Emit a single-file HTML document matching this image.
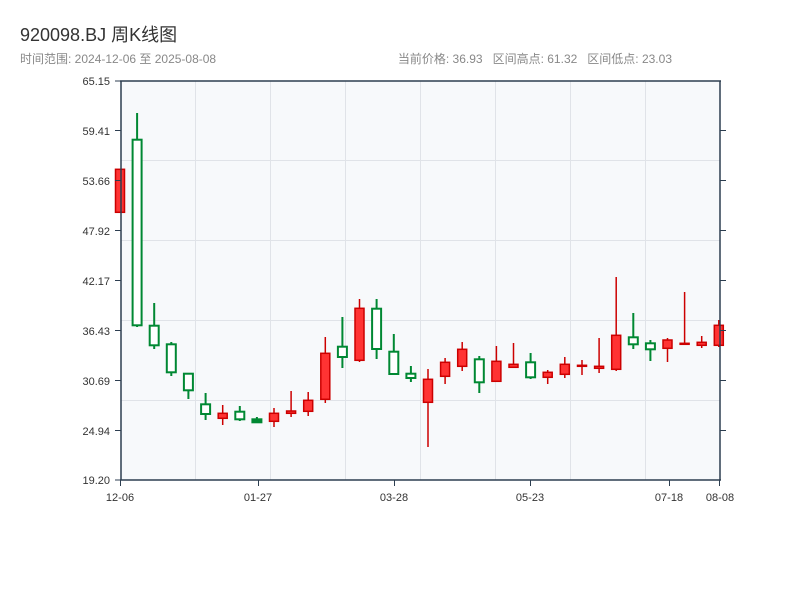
<!DOCTYPE html><html><head><meta charset="utf-8"><style>
body{margin:0;background:#fff;width:800px;height:600px;overflow:hidden;font-family:"Liberation Sans","Noto Sans CJK SC",sans-serif}
</style></head><body>
<svg width="800" height="600" xmlns="http://www.w3.org/2000/svg" font-family="Liberation Sans, Noto Sans CJK SC, sans-serif">
<text x="20" y="41" font-size="18" fill="#333">920098.BJ 周K线图</text>
<text x="20" y="63" font-size="12" fill="#888">时间范围: 2024-12-06 至 2025-08-08</text>
<text x="672" y="63" font-size="12" fill="#888" text-anchor="end" xml:space="preserve" style="white-space:pre">当前价格: 36.93   区间高点: 61.32   区间低点: 23.03</text>
<rect x="121" y="81" width="599" height="399" fill="#f7f9fb"/>
<g stroke="#e0e3e8" stroke-width="1">
<line x1="121" x2="720" y1="160.5" y2="160.5"/><line x1="121" x2="720" y1="240.5" y2="240.5"/><line x1="121" x2="720" y1="320.5" y2="320.5"/><line x1="121" x2="720" y1="400.5" y2="400.5"/>
<line x1="195.5" x2="195.5" y1="81" y2="480"/><line x1="270.5" x2="270.5" y1="81" y2="480"/><line x1="345.5" x2="345.5" y1="81" y2="480"/><line x1="420.5" x2="420.5" y1="81" y2="480"/><line x1="495.5" x2="495.5" y1="81" y2="480"/><line x1="570.5" x2="570.5" y1="81" y2="480"/><line x1="645.5" x2="645.5" y1="81" y2="480"/>
</g>
<g stroke="#008833" stroke-width="2" fill="#fff">
<line x1="137.1" x2="137.1" y1="113" y2="327"/><rect x="132.6" y="139.7" width="9" height="185.6"/>
<line x1="154.2" x2="154.2" y1="303" y2="349"/><rect x="149.7" y="325.7" width="9" height="19.6"/>
<line x1="171.3" x2="171.3" y1="342" y2="376"/><rect x="166.8" y="344.3" width="9" height="28"/>
<line x1="188.4" x2="188.4" y1="373" y2="399"/><rect x="183.9" y="373.7" width="9" height="16.6"/>
<line x1="205.6" x2="205.6" y1="393" y2="420"/><rect x="201.1" y="404.3" width="9" height="9.7"/>
<line x1="239.8" x2="239.8" y1="406" y2="421"/><rect x="235.3" y="411.7" width="9" height="7.6"/>
<line x1="256.9" x2="256.9" y1="417" y2="422"/><rect x="252.4" y="419.3" width="9" height="3" fill="#008833"/>
<line x1="342.4" x2="342.4" y1="317" y2="368"/><rect x="337.9" y="346.7" width="9" height="10.3"/>
<line x1="376.6" x2="376.6" y1="299" y2="359"/><rect x="372.1" y="308.7" width="9" height="40.3"/>
<line x1="393.8" x2="393.8" y1="334" y2="352"/><rect x="389.3" y="351.7" width="9" height="22.3"/>
<line x1="410.9" x2="410.9" y1="366" y2="382"/><rect x="406.4" y="373.7" width="9" height="4.3"/>
<line x1="479.3" x2="479.3" y1="356" y2="393"/><rect x="474.8" y="359.3" width="9" height="23"/>
<line x1="530.6" x2="530.6" y1="353" y2="379"/><rect x="526.1" y="362.3" width="9" height="15"/>
<line x1="633.3" x2="633.3" y1="313" y2="349"/><rect x="628.8" y="337.3" width="9" height="7"/>
<line x1="650.4" x2="650.4" y1="340" y2="361"/><rect x="645.9" y="343.3" width="9" height="6"/>
</g>
<g stroke="#cc0000" stroke-width="1.5" fill="#ff3333">
<rect x="115.5" y="169.3" width="9" height="43"/>
<line x1="222.7" x2="222.7" y1="405" y2="425"/><rect x="218.2" y="413.3" width="9" height="5"/>
<line x1="274" x2="274" y1="408" y2="427"/><rect x="269.5" y="413.3" width="9" height="8"/>
<line x1="291.1" x2="291.1" y1="391" y2="417"/><rect x="286.6" y="411" width="9" height="2.3"/>
<line x1="308.2" x2="308.2" y1="392" y2="416"/><rect x="303.7" y="400.3" width="9" height="11"/>
<line x1="325.3" x2="325.3" y1="337" y2="403"/><rect x="320.8" y="353.3" width="9" height="46"/>
<line x1="359.5" x2="359.5" y1="299" y2="362"/><rect x="355" y="308.3" width="9" height="52"/>
<line x1="428" x2="428" y1="369" y2="447"/><rect x="423.5" y="379.3" width="9" height="23"/>
<line x1="445.1" x2="445.1" y1="358" y2="384"/><rect x="440.6" y="362.3" width="9" height="14"/>
<line x1="462.2" x2="462.2" y1="342" y2="371"/><rect x="457.7" y="349.3" width="9" height="17"/>
<line x1="496.4" x2="496.4" y1="346" y2="381"/><rect x="491.9" y="361.3" width="9" height="20"/>
<line x1="513.5" x2="513.5" y1="343" y2="367"/><rect x="509" y="364.3" width="9" height="3"/>
<line x1="547.7" x2="547.7" y1="370" y2="384"/><rect x="543.2" y="372.3" width="9" height="5"/>
<line x1="564.8" x2="564.8" y1="357" y2="378"/><rect x="560.3" y="364.3" width="9" height="10"/>
<line x1="582" x2="582" y1="360" y2="375"/><rect x="577.5" y="365.3" width="9" height="1"/>
<line x1="599.1" x2="599.1" y1="338" y2="373"/><rect x="594.6" y="366.3" width="9" height="2"/>
<line x1="616.2" x2="616.2" y1="277" y2="371"/><rect x="611.7" y="335.3" width="9" height="34"/>
<line x1="667.5" x2="667.5" y1="338" y2="362"/><rect x="663" y="340" width="9" height="8.3"/>
<line x1="684.6" x2="684.6" y1="292" y2="344"/><rect x="680.1" y="343.3" width="9" height="1"/>
<line x1="701.7" x2="701.7" y1="336" y2="348"/><rect x="697.2" y="342.3" width="9" height="3"/>
<line x1="718.8" x2="718.8" y1="320" y2="347"/><rect x="714.3" y="325.3" width="9" height="20"/>
</g>
<g stroke="#2d3e50" stroke-width="1.5">
<line x1="121" x2="121" y1="80.5" y2="480.5"/><line x1="720" x2="720" y1="80.5" y2="480.5"/>
<line x1="120" x2="721" y1="81" y2="81"/><line x1="120" x2="721" y1="480" y2="480"/>
</g>
<g stroke="#2d3e50" stroke-width="1">
<line x1="115" x2="121" y1="81" y2="81"/><line x1="115" x2="121" y1="130.5" y2="130.5"/><line x1="115" x2="121" y1="180.5" y2="180.5"/><line x1="115" x2="121" y1="230.5" y2="230.5"/><line x1="115" x2="121" y1="280.5" y2="280.5"/><line x1="115" x2="121" y1="330.5" y2="330.5"/><line x1="115" x2="121" y1="380.5" y2="380.5"/><line x1="115" x2="121" y1="430.5" y2="430.5"/><line x1="115" x2="121" y1="480" y2="480"/>
<line x1="720" x2="726" y1="130.5" y2="130.5"/><line x1="720" x2="726" y1="180.5" y2="180.5"/><line x1="720" x2="726" y1="230.5" y2="230.5"/><line x1="720" x2="726" y1="280.5" y2="280.5"/><line x1="720" x2="726" y1="330.5" y2="330.5"/><line x1="720" x2="726" y1="380.5" y2="380.5"/><line x1="720" x2="726" y1="430.5" y2="430.5"/>
<line x1="120.5" x2="120.5" y1="480" y2="486"/><line x1="258.5" x2="258.5" y1="480" y2="486"/><line x1="394.5" x2="394.5" y1="480" y2="486"/><line x1="530.5" x2="530.5" y1="480" y2="486"/><line x1="669.5" x2="669.5" y1="480" y2="486"/><line x1="719.5" x2="719.5" y1="480" y2="486"/>
</g>
<g font-size="11" fill="#333" text-anchor="end">
<text x="110" y="85">65.15</text><text x="110" y="135">59.41</text><text x="110" y="185">53.66</text><text x="110" y="235">47.92</text><text x="110" y="285">42.17</text><text x="110" y="335">36.43</text><text x="110" y="385">30.69</text><text x="110" y="435">24.94</text><text x="110" y="484">19.20</text>
</g>
<g font-size="11" fill="#333" text-anchor="middle">
<text x="120" y="501">12-06</text><text x="258" y="501">01-27</text><text x="394" y="501">03-28</text><text x="530" y="501">05-23</text><text x="669" y="501">07-18</text><text x="720" y="501">08-08</text>
</g>
</svg>
</body></html>
